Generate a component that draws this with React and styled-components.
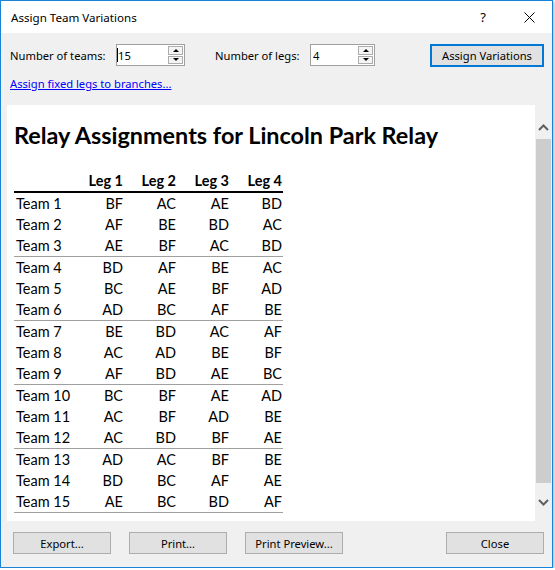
import React from 'react';
import styled, { createGlobalStyle } from 'styled-components';

const UI_FONT = `"Noto Sans", "Liberation Sans", sans-serif`;
const REPORT_FONT = `Lato, "Noto Sans", sans-serif`;

const GlobalStyle = createGlobalStyle`
  body {
    margin: 0;
    background: #fff;
  }
`;

const ROWS = [
  ['Team 1', 'BF', 'AC', 'AE', 'BD'],
  ['Team 2', 'AF', 'BE', 'BD', 'AC'],
  ['Team 3', 'AE', 'BF', 'AC', 'BD'],
  ['Team 4', 'BD', 'AF', 'BE', 'AC'],
  ['Team 5', 'BC', 'AE', 'BF', 'AD'],
  ['Team 6', 'AD', 'BC', 'AF', 'BE'],
  ['Team 7', 'BE', 'BD', 'AC', 'AF'],
  ['Team 8', 'AC', 'AD', 'BE', 'BF'],
  ['Team 9', 'AF', 'BD', 'AE', 'BC'],
  ['Team 10', 'BC', 'BF', 'AE', 'AD'],
  ['Team 11', 'AC', 'BF', 'AD', 'BE'],
  ['Team 12', 'AC', 'BD', 'BF', 'AE'],
  ['Team 13', 'AD', 'AC', 'BF', 'BE'],
  ['Team 14', 'BD', 'BC', 'AF', 'AE'],
  ['Team 15', 'AE', 'BC', 'BD', 'AF'],
];

const Window = styled.div`
  width: 551px;
  height: 566px;
  border: 1px solid #1883d7;
  box-shadow: 1px 1px 3px rgba(0, 0, 0, 0.35);
  display: flex;
  flex-direction: column;
  background: #f0f0f0;
  font-family: ${UI_FONT};
  font-size: 11.2px;
  color: #000;
`;

const TitleBar = styled.div`
  height: 32px;
  flex: none;
  display: flex;
  align-items: center;
  background: #fff;
`;

const Title = styled.span`
  padding-left: 10px;
  flex: 1;
  font-size: 11.6px;
`;

const CaptionButton = styled.div`
  width: 46px;
  height: 32px;
  display: flex;
  align-items: center;
  justify-content: center;
  font-size: 13px;
`;

const Toolbar = styled.div`
  display: flex;
  align-items: center;
  height: 24px;
  margin-top: 10px;
  padding: 0 8px 0 9px;
`;

const Label = styled.span`
  width: ${props => props.$width}px;
  flex: none;
  white-space: nowrap;
`;

const SpinBox = styled.div`
  width: ${props => props.$width}px;
  height: 22px;
  box-sizing: border-box;
  border: 1px solid #a0a0a0;
  background: #fff;
  display: flex;
  align-items: center;
  margin-right: ${props => props.$gap}px;
  flex: none;
`;

const SpinValue = styled.span`
  flex: 1;
  display: flex;
  align-items: center;
  padding-left: ${props => (props.$caret ? 0 : 2)}px;

  &::before {
    content: '';
    display: ${props => (props.$caret ? 'block' : 'none')};
    width: 1px;
    height: 14px;
    background: #000;
  }
`;

const SpinButtons = styled.div`
  width: 15px;
  height: 18px;
  margin-right: 1px;
  display: flex;
  flex-direction: column;
  gap: 1px;
`;

const SpinArrow = styled.div`
  flex: 1;
  box-sizing: border-box;
  border: 1px solid #adadad;
  background: #f4f4f4;
  display: flex;
  align-items: center;
  justify-content: center;

  &::after {
    content: '';
    border-left: 3px solid transparent;
    border-right: 3px solid transparent;
    ${props =>
      props.$down ? 'border-top: 3px solid #000;' : 'border-bottom: 3px solid #000;'}
  }
`;

const Button = styled.button`
  width: ${props => props.$width || 98}px;
  height: ${props => (props.$default ? 23 : 22)}px;
  box-sizing: border-box;
  border: ${props => (props.$default ? '2px solid #0078d7' : '1px solid #adadad')};
  background: #e1e1e1;
  font-family: ${UI_FONT};
  font-size: 11.2px;
  color: #000;
  padding: 0;
  flex: none;
  margin-left: ${props => props.$offset || 0}px;
`;

const LinkRow = styled.a`
  display: block;
  align-self: flex-start;
  margin: 9px 0 0 9px;
  line-height: 16px;
  color: #0000ff;
  text-decoration: underline;
`;

const ReportPanel = styled.div`
  height: 416px;
  margin: 13px 0 0 6px;
  display: flex;
  flex: none;
`;

const Report = styled.div`
  flex: 1;
  background: #fff;
  padding: 15px 7px 0;
  overflow: hidden;
  font-family: ${REPORT_FONT};
  color: #000;
`;

const ReportTitle = styled.h1`
  margin: 0;
  font-size: 23.4px;
  line-height: 30px;
  font-weight: 700;
  white-space: nowrap;
`;

const Table = styled.table`
  margin-top: 20px;
  border-collapse: collapse;
  font-size: 14.5px;
`;

const HeadCell = styled.th`
  height: 21px;
  padding: ${props => (props.$first ? '0 0 0 2px' : '0 1px 0 0')};
  width: ${props => (props.$first ? 55 : 52)}px;
  text-align: right;
  font-weight: 700;
  border-bottom: 2px solid #000;
`;

const Row = styled.tr`
  border-bottom: ${props => (props.$groupEnd ? '1px solid #a0a0a0' : 'none')};
`;

const Cell = styled.td`
  height: 21px;
  padding: ${props => (props.$first ? '0 0 0 2px' : '0 1px 0 0')};
  text-align: ${props => (props.$first ? 'left' : 'right')};
  white-space: nowrap;
`;

const ScrollBar = styled.div`
  width: 17px;
  display: flex;
  flex-direction: column;
  align-items: center;
  background: #f0f0f0;
`;

const ScrollArrow = styled.div`
  height: ${props => props.$height}px;
  display: flex;
  align-items: center;
  justify-content: center;
  padding-top: ${props => props.$shift || 0}px;
  box-sizing: border-box;
`;

const ScrollThumb = styled.div`
  width: 15px;
  flex: 1;
  background: #cdcdcd;
`;

const Footer = styled.div`
  flex: 1;
  display: flex;
  align-items: flex-start;
  padding: 11px 8px 0 12px;
`;

const Spacer = styled.div`
  flex: 1;
`;

function Chevron({ up }) {
  return (
    <svg width="11" height="7" viewBox="0 0 11 7">
      <path
        d={up ? 'M1 6 L5.5 1.5 L10 6' : 'M1 1 L5.5 5.5 L10 1'}
        fill="none"
        stroke="#606060"
        strokeWidth="2"
      />
    </svg>
  );
}

function Spinner({ value, width, gap, caret }) {
  return (
    <SpinBox $width={width} $gap={gap}>
      <SpinValue $caret={caret}>{value}</SpinValue>
      <SpinButtons>
        <SpinArrow />
        <SpinArrow $down />
      </SpinButtons>
    </SpinBox>
  );
}

function App() {
  return (
    <>
      <GlobalStyle />
      <Window>
        <TitleBar>
          <Title>Assign Team Variations</Title>
          <CaptionButton>?</CaptionButton>
          <CaptionButton>
            <svg width="11" height="11" viewBox="0 0 11 11">
              <path d="M0.5 0.5 L10.5 10.5 M10.5 0.5 L0.5 10.5" stroke="#000" strokeWidth="1" />
            </svg>
          </CaptionButton>
        </TitleBar>

        <Toolbar>
          <Label $width={106}>Number of teams:</Label>
          <Spinner value="15" width={69} gap={30} caret />
          <Label $width={95}>Number of legs:</Label>
          <Spinner value="4" width={65} gap={0} />
          <Spacer />
          <Button $default $width={114}>
            Assign Variations
          </Button>
        </Toolbar>

        <LinkRow href="#">Assign fixed legs to branches...</LinkRow>

        <ReportPanel>
          <Report>
            <ReportTitle>Relay Assignments for Lincoln Park Relay</ReportTitle>
            <Table>
              <thead>
                <tr>
                  <HeadCell $first />
                  <HeadCell>Leg 1</HeadCell>
                  <HeadCell>Leg 2</HeadCell>
                  <HeadCell>Leg 3</HeadCell>
                  <HeadCell>Leg 4</HeadCell>
                </tr>
              </thead>
              <tbody>
                {ROWS.map((row, i) => (
                  <Row key={row[0]} $groupEnd={i % 3 === 2}>
                    {row.map((value, j) => (
                      <Cell key={j} $first={j === 0}>
                        {value}
                      </Cell>
                    ))}
                  </Row>
                ))}
              </tbody>
            </Table>
          </Report>
          <ScrollBar>
            <ScrollArrow $height={34} $shift={10}>
              <Chevron up />
            </ScrollArrow>
            <ScrollThumb />
            <ScrollArrow $height={38}>
              <Chevron />
            </ScrollArrow>
          </ScrollBar>
        </ReportPanel>

        <Footer>
          <Button>Export...</Button>
          <Button $offset={18}>Print...</Button>
          <Button $offset={18}>Print Preview...</Button>
          <Spacer />
          <Button>Close</Button>
        </Footer>
      </Window>
    </>
  );
}

export default App;
